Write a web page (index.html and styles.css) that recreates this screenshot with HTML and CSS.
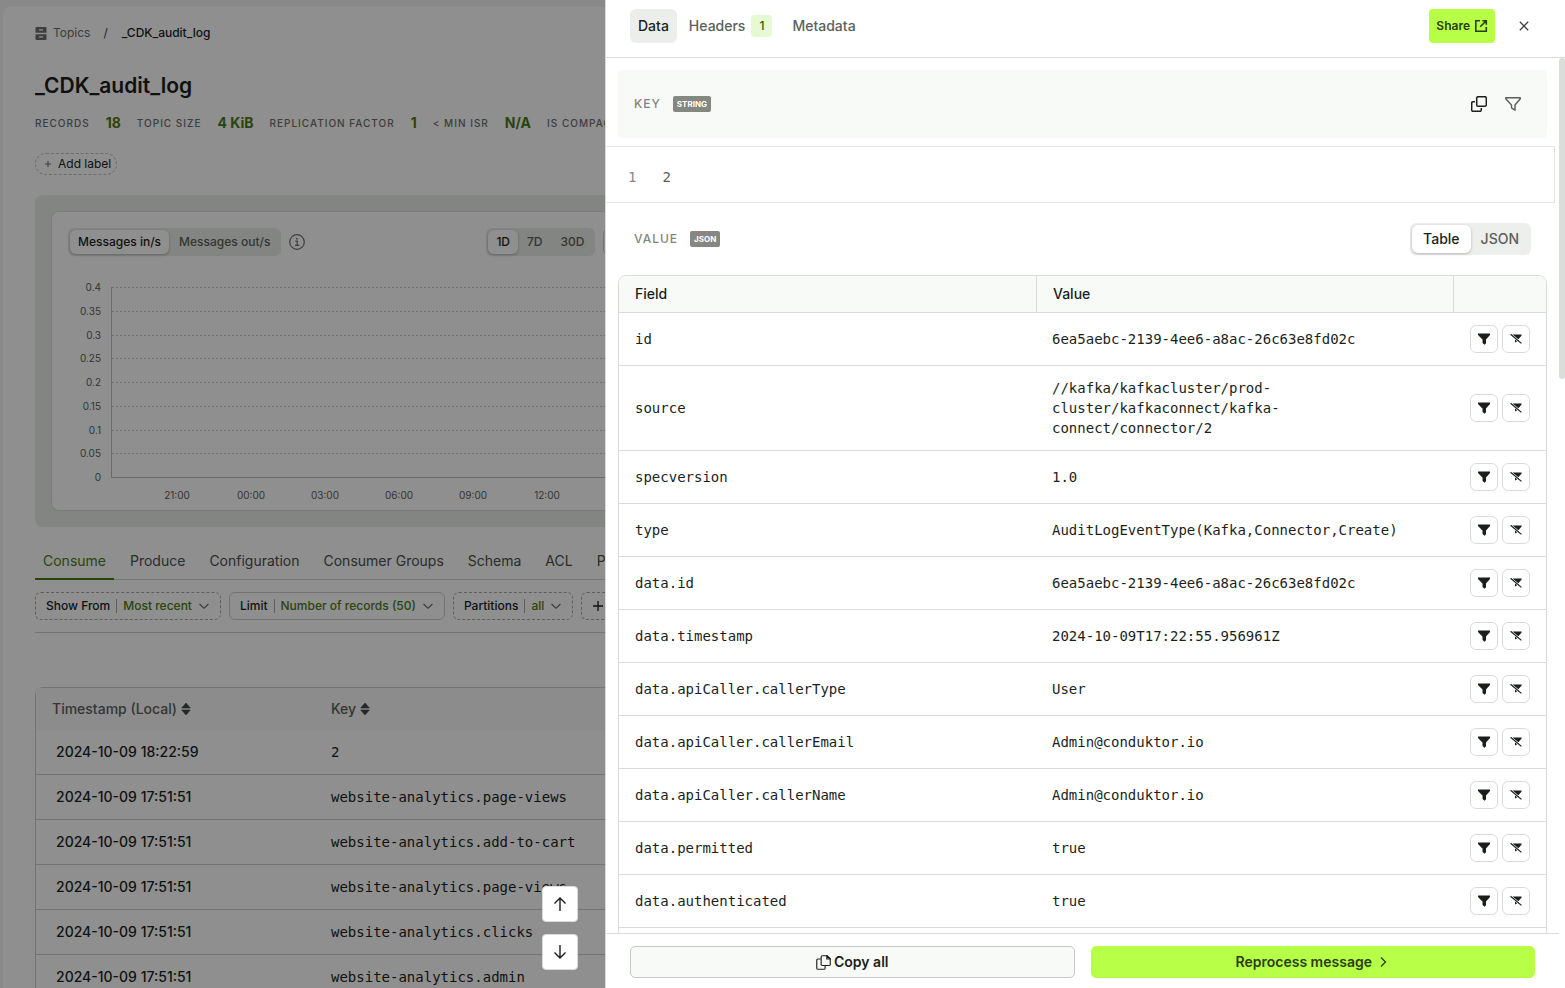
FILE: index.html
```html
<!DOCTYPE html>
<html lang="en">
<head>
<meta charset="utf-8">
<title>_CDK_audit_log</title>
<link rel="stylesheet" href="styles.css">
</head>
<body>
<svg class="sprite" aria-hidden="true">
  <symbol id="i-funnel" viewBox="0 0 14 14"><path d="M1 1.600h12v1.400L9 7.400v3.800L7.500 12.800 5.500 11V7.400L1 3z" fill="currentColor"/></symbol>
  <symbol id="i-funnel-off" viewBox="0 0 14 14"><path d="M3.600 2.600h9v1L9.400 7.200 3.600 2.600zM6 7.400v3l2.300-1.200z" fill="currentColor"/><path d="M1.600 2.200l10.800 9.200" stroke="currentColor" stroke-width="1.200" fill="none"/></symbol>
  <symbol id="i-chevron" viewBox="0 0 12 12"><path d="M1.500 4l4.500 4.300L10.500 4" fill="none" stroke="currentColor" stroke-width="1.100"/></symbol>
  <symbol id="i-sort" viewBox="0 0 10 14"><path d="M5 1l4.300 5H.7zM5 13L.7 8h8.600z" fill="currentColor" stroke="currentColor" stroke-width=".6" stroke-linejoin="round"/></symbol>
</svg>

<main class="page">
  <nav class="crumbs" aria-label="Breadcrumb">
    <svg class="crumb-icon" viewBox="0 0 12 13"><path d="M1.500 0h9a1 1 0 0 1 1 1v4.800H.5V1a1 1 0 0 1 1-1zM.5 7.200h11V12a1 1 0 0 1-1 1h-9a1 1 0 0 1-1-1z" fill="currentColor"/><path d="M4 2.200h4v1.300H4zM4 9.300h4v1.300H4z" fill="#fff"/></svg>
    <a href="#" class="crumb-link">Topics</a><span class="crumb-sep">/</span><span class="crumb-here">_CDK_audit_log</span>
  </nav>
  <h1 class="title">_CDK_audit_log</h1>
  <dl class="stats">
    <div><dt>RECORDS</dt><dd>18</dd></div>
    <div><dt>TOPIC SIZE</dt><dd>4 KiB</dd></div>
    <div><dt>REPLICATION FACTOR</dt><dd>1</dd></div>
    <div><dt>&lt; MIN ISR</dt><dd>N/A</dd></div>
    <div><dt>IS COMPACTED</dt><dd>No</dd></div>
  </dl>
  <button class="add-label"><svg viewBox="0 0 8 8"><path d="M4 1v6M1 4h6" stroke="currentColor"/></svg>Add label</button>

  <section class="panel">
    <div class="card">
      <div class="card-head">
        <div class="seg seg-sm"><button class="on">Messages in/s</button><button>Messages out/s</button></div>
        <svg class="info" viewBox="0 0 16 16"><circle cx="8" cy="8" r="7.300" fill="none" stroke="currentColor" stroke-width="1.200"/><path d="M6.300 7.200h1.900v4M6 11.400h4.300" fill="none" stroke="currentColor" stroke-width="1.200"/><circle cx="7.900" cy="4.800" r=".9" fill="currentColor"/></svg>
        <div class="seg seg-sm range"><button class="on">1D</button><button>7D</button><button>30D</button></div>
        <span class="date-range"></span>
      </div>
      <div class="chart">
        <div class="y-axis"><span>0.4</span><span>0.35</span><span>0.3</span><span>0.25</span><span>0.2</span><span>0.15</span><span>0.1</span><span>0.05</span><span>0</span></div>
        <div class="plot"><i></i><i></i><i></i><i></i><i></i><i></i><i></i><i></i></div>
      </div>
      <div class="x-axis"><span>21:00</span><span>00:00</span><span>03:00</span><span>06:00</span><span>09:00</span><span>12:00</span></div>
    </div>
  </section>

  <nav class="tabs">
    <a href="#" class="on">Consume</a><a href="#">Produce</a><a href="#">Configuration</a><a href="#">Consumer Groups</a><a href="#">Schema</a><a href="#">ACL</a><a href="#">Partitions</a>
  </nav>
  <div class="filters">
    <button class="filter">Show From<span>Most recent</span><svg><use href="#i-chevron"/></svg></button>
    <button class="filter solid">Limit<span>Number of records (50)</span><svg><use href="#i-chevron"/></svg></button>
    <button class="filter">Partitions<span>all</span><svg><use href="#i-chevron"/></svg></button>
    <button class="filter" aria-label="Add filter"><svg viewBox="0 0 12 12"><path d="M6 1v10M1 6h10" stroke="#1b1f1c" stroke-width="1.300"/></svg></button>
  </div>
  <table class="records">
    <thead><tr><th class="c-time">Timestamp (Local) <svg><use href="#i-sort"/></svg></th><th>Key <svg><use href="#i-sort"/></svg></th></tr></thead>
    <tbody>
      <tr><td>2024-10-09 18:22:59</td><td>2</td></tr>
      <tr><td>2024-10-09 17:51:51</td><td>website-analytics.page-views</td></tr>
      <tr><td>2024-10-09 17:51:51</td><td>website-analytics.add-to-cart</td></tr>
      <tr><td>2024-10-09 17:51:51</td><td>website-analytics.page-views</td></tr>
      <tr><td>2024-10-09 17:51:51</td><td>website-analytics.clicks</td></tr>
      <tr><td>2024-10-09 17:51:51</td><td>website-analytics.admin</td></tr>
    </tbody>
  </table>
</main>

<div class="overlay">
  <div class="stepper">
    <button aria-label="Previous message"><svg viewBox="0 0 16 16"><path d="M8 15V2M2.500 7.500L8 2l5.500 5.500" fill="none" stroke="currentColor" stroke-width="1.400"/></svg></button>
    <button aria-label="Next message"><svg viewBox="0 0 16 16"><path d="M8 1v13M2.500 8.500L8 14l5.500-5.500" fill="none" stroke="currentColor" stroke-width="1.400"/></svg></button>
  </div>
  <aside class="drawer">
    <header class="drawer-head">
      <button class="dtab on">Data</button>
      <button class="dtab">Headers<span class="count">1</span></button>
      <button class="dtab">Metadata</button>
      <button class="share">Share<svg viewBox="0 0 14 14"><path d="M6 1.700H1.800v10.500h10.500V8M8.300 1.700h4v4M12.300 1.700L6.200 7.800" fill="none" stroke="currentColor" stroke-width="1.600"/></svg></button>
      <button class="close" aria-label="Close"><svg viewBox="0 0 10 10"><path d="M.8.8l8.400 8.400M9.200.8L.8 9.200" stroke="currentColor" stroke-width="1.300"/></svg></button>
    </header>
    <div class="drawer-main">
      <div class="drawer-col">
        <div class="scroll">
          <div class="key-bar">
            <h2>KEY</h2><span class="tag">STRING</span>
            <div class="key-actions">
              <button aria-label="Copy key"><svg viewBox="0 0 16 16" fill="none" stroke="currentColor" stroke-width="1.500"><rect x="5.700" y=".7" width="9.600" height="9.600" rx="1.300"/><path d="M4 5.700H2A1.300 1.300 0 0 0 .7 7v7A1.300 1.300 0 0 0 2 15.300h7a1.300 1.300 0 0 0 1.300-1.300v-2"/></svg></button>
              <button class="muted" aria-label="Filter by key"><svg viewBox="0 0 16 16" fill="none" stroke="currentColor" stroke-width="1.400" stroke-linejoin="round"><path d="M.7 1.700h14.600v1L10 9v5.200L6.500 11.800V9L.7 2.700z"/></svg></button>
            </div>
          </div>
          <div class="editor"><span class="line-no">1</span><code>2</code></div>
          <div class="value-bar">
            <h2>VALUE</h2><span class="tag">JSON</span>
            <div class="seg view"><button class="on">Table</button><button>JSON</button></div>
          </div>
          <div class="fields-wrap">
          <table class="fields">
            <thead><tr><th>Field</th><th>Value</th><th class="c-act"></th></tr></thead>
            <tbody id="fields"></tbody>
          </table>
          </div>
        </div>
        <footer class="drawer-foot">
          <button class="btn"><svg viewBox="0 0 16 16" fill="none" stroke="currentColor" stroke-width="1.200"><path d="M6.700.8h5.300L15.200 4v6a1.200 1.200 0 0 1-1.200 1.200H6.700A1.200 1.200 0 0 1 5.500 10V2A1.200 1.200 0 0 1 6.700.8z"/><path d="M11.500.8V4.300h3.700zM5 4.200H2A1.200 1.200 0 0 0 .8 5.400V14A1.200 1.200 0 0 0 2 15.200h6.500A1.200 1.200 0 0 0 9.700 14v-2.500"/></svg>Copy all</button>
          <button class="btn primary">Reprocess message<svg class="next" viewBox="0 0 12 12"><path d="M3 1.500L7.500 6 3 10.500" fill="none" stroke="currentColor" stroke-width="1.300"/></svg></button>
        </footer>
      </div>
      <div class="track"><div class="thumb"></div></div>
    </div>
  </aside>
</div>
<script src="app.js"></script>
</body>
</html>
```
FILE: styles.css
```css
* { box-sizing: border-box; }
body {
  margin: 0;
  height: 100vh;
  overflow: hidden;
  background: #f4f4f4;
  color: #1b1f1c;
  font: 500 14px/20px Inter, "Liberation Sans", sans-serif;
}
button { font: inherit; color: inherit; border: 0; background: none; padding: 0; margin: 0; white-space: nowrap; }
a { color: inherit; text-decoration: none; }
svg { display: block; flex: none; }
table { border-collapse: separate; border-spacing: 0; }
h1, h2, dl, dd { margin: 0; }
.sprite { position: absolute; width: 0; height: 0; }

.page {
  height: calc(100vh - 7px);
  margin: 7px 0 0 3px;
  padding: 16px 32px 0;
  overflow: hidden;
  background: #fff;
  border-radius: 8px 0 0 0;
}
.crumbs { display: flex; align-items: center; font-size: 12px; font-weight: 400; }
.crumb-icon { width: 12px; height: 13px; margin-right: 6px; color: #6c706d; }
.crumb-link { color: #6c706d; }
.crumb-sep { margin: 0 14px 0 13px; color: #444; }
.crumb-here { font-weight: 500; }
.title { margin-top: 29px; font-size: 21px; line-height: 28px; font-weight: 600; }
.stats { display: flex; gap: 16px; margin-top: 13px; white-space: nowrap; }
.stats div { display: flex; gap: 16px; align-items: center; }
.stats dt { color: #6c706d; font-size: 10px; letter-spacing: 1px; }
.stats dd { color: #4c7c12; font-weight: 700; }
.add-label {
  display: flex; align-items: center; gap: 6px;
  margin-top: 20px; padding: 0 5px 0 8px; height: 22px;
  border: 1px dashed #bfc3c0; border-radius: 11px;
  font-size: 12px; font-weight: 400;
}
.add-label svg { width: 8px; height: 8px; color: #6c706d; }

.panel { margin-top: 20px; padding: 16px; background: #e9ede9; border-radius: 8px; }
.card { padding: 16px 16px 5px; background: #fff; border: 1px solid #d9dcd9; border-radius: 8px; }
.card-head { display: flex; align-items: center; }
.seg { display: flex; padding: 2px; background: #ecefec; border-radius: 6px; color: #5c605d; }
.seg button { padding: 0 10px; height: 28px; border-radius: 6px; }
.seg .on { background: #fff; color: #1b1f1c; box-shadow: 0 1px 3px rgba(0, 0, 0, .25); }
.seg-sm { font-size: 12px; background: #e9ede9; }
.seg-sm button { padding: 0 8px; height: 24px; }
.seg-sm button + button { padding: 0 9px 0 10px; }
.info { width: 16px; height: 16px; margin-left: 8px; color: #6c706d; }
.range { margin-left: 181px; }
.range button + button { padding: 0 9px; }
.date-range { flex: 1; margin-left: 8px; height: 24px; border: 1px solid #c9ccc9; border-radius: 4px; }
.chart { display: flex; margin-top: 31px; height: 191px; }
.y-axis {
  display: flex; flex-direction: column; justify-content: space-between;
  width: 33px; margin: -10px 10px -9px 0;
  text-align: right; font-size: 10px; font-weight: 400; color: #5c605d;
}
.plot { flex: 1; display: flex; flex-direction: column; border: solid #bcbfbc; border-width: 0 0 1px 1px; }
.plot i { flex: 1; background: repeating-linear-gradient(90deg, #c6c9c6 0 2px, transparent 2px 4px) top / 100% 1px no-repeat; }
.x-axis { display: flex; margin: 7px 0 0 72px; font-size: 10px; font-weight: 400; color: #5c605d; }
.x-axis span { width: 74px; text-align: center; }

.tabs { display: flex; gap: 8px; margin-top: 16px; height: 37px; border-bottom: 1px solid #d0d3d0; color: #4c504d; font-weight: 400; white-space: nowrap; }
.tabs a { height: 37px; padding: 8px 8px 0; }
.tabs .on { color: #4c7c12; border-bottom: 2px solid #4c7c12; }
.filters { display: flex; gap: 8px; padding: 12px 0; border-bottom: 1px solid #cccfcc; }
.filter { display: flex; align-items: center; height: 28px; padding: 0 10px; border: 1px dashed #a5a9a6; border-radius: 6px; font-size: 12px; }
.filter.solid { border: 1px solid #cccfcc; }
.filter span { margin: 0 6px; padding-left: 6px; line-height: 14px; border-left: 1px solid #a5a9a6; color: #4c7c12; }
.filter svg { width: 12px; height: 12px; color: #5c605d; }

.records { width: 100%; margin-top: 54px; table-layout: fixed; border: 1px solid #cccfcc; border-radius: 8px 8px 0 0; }
.records th { height: 42px; padding: 0 16px; text-align: left; font-weight: 500; color: #5c605d; background: #f9faf9; }
.records th svg { display: inline-block; width: 10px; height: 14px; vertical-align: -2px; color: #434744; }
.c-time { width: 279px; }
.records td { height: 45px; padding: 0 16px; border-bottom: 1px solid #cccfcc; }
.records td:first-child { padding-left: 20px; }
.records td + td, .fields td, .editor { font-family: "DejaVu Sans Mono", "Liberation Mono", monospace; font-weight: 400; }

.overlay { position: fixed; inset: 0; display: flex; justify-content: flex-end; background: rgba(0, 0, 0, .44); }
.stepper { align-self: flex-end; display: flex; flex-direction: column; gap: 12px; margin: 0 27px 18px 0; }
.stepper button { display: grid; place-items: center; width: 36px; height: 36px; background: #fff; border: 1px solid #d9dcd9; border-radius: 4px; }
.stepper svg { width: 16px; height: 16px; }
.drawer { display: flex; flex-direction: column; width: 960px; background: #fff; border-left: 1px solid #d9dcd9; }
.drawer-head { display: flex; gap: 4px; padding: 9px 24px 14px; border-bottom: 1px solid #d9dcd9; }
.dtab { display: flex; align-items: center; height: 34px; padding: 0 8px; border-radius: 6px; color: #5c605d; }
.dtab.on { background: #eceeec; color: #1b1f1c; }
.count { margin-left: 6px; padding: 1px 8px; background: #e5f9d3; border-radius: 4px; color: #35570c; font-size: 12px; }
.share { display: flex; align-items: center; gap: 4px; height: 34px; margin-left: auto; padding: 0 7px; background: #b8ff48; border-radius: 4px; font-size: 12px; font-weight: 600; color: #2b3d12; }
.share svg { width: 14px; height: 14px; }
.close { display: grid; place-items: center; width: 34px; height: 34px; margin-left: 8px; }
.close svg { width: 10px; height: 10px; color: #444; }

.drawer-main { flex: 1; min-height: 0; display: flex; }
.drawer-col { flex: 1; min-width: 0; display: flex; flex-direction: column; }
.track { width: 6px; }
.thumb { height: 321px; background: #dadedb; border-radius: 3px; }
.scroll { flex: 1; min-height: 0; overflow: hidden; padding-top: 12px; }
.key-bar { display: flex; align-items: center; height: 68px; margin: 0 12px; padding: 0 17px 0 16px; background: #f8faf8; border-radius: 4px; }
h2 { font-size: 12px; line-height: 16px; font-weight: 500; letter-spacing: 1px; color: #80857f; }
.tag { margin-left: 12px; padding: 0 4px; border-radius: 2px; background: #858781; color: #fff; font-size: 8px; line-height: 16px; font-weight: 700; }
.key-actions { display: flex; margin-left: auto; }
.key-actions button { display: grid; place-items: center; width: 34px; height: 34px; }
.key-actions svg { width: 16px; height: 16px; }
.key-actions .muted { color: #5c605d; }
.editor { display: flex; gap: 26px; margin: 8px 4px 0 0; padding: 20px 22px 15px; border: 1px solid #e3e5e3; border-left: 0; color: #5c605d; }
.editor code { font: inherit; }
.line-no { color: #858a86; }
.value-bar { display: flex; align-items: center; padding: 20px 28px; }
.view { margin-left: auto; }
.view .on { padding: 0 11px; }

.fields-wrap { margin: 0 12px; }
.fields { width: 100%; table-layout: fixed; border: 1px solid #d9dcd9; border-radius: 8px; overflow: hidden; }
.fields th { height: 37px; padding: 0 16px; text-align: left; font-weight: 500; background: #f8faf8; border-bottom: 1px solid #d9dcd9; }
.fields th + th { border-left: 1px solid #d9dcd9; }
.fields .c-act { width: 93px; }
.fields td { height: 53px; padding: 12px 16px; border-bottom: 1px solid #d9dcd9; }
.fields td:last-child { padding: 0 16px 0 17px; }
.acts { display: flex; gap: 4px; }
.acts button { display: grid; place-items: center; width: 28px; height: 28px; border: 1px solid #d9dcd9; border-radius: 6px; }
.acts svg { width: 14px; height: 14px; }

.drawer-foot { display: flex; gap: 16px; padding: 12px 24px 10px; border-top: 1px solid #d9dcd9; }
.btn { flex: 1; display: flex; align-items: center; justify-content: center; gap: 3px; height: 32px; background: #f8faf8; border: 1px solid #c6c9c6; border-radius: 5px; font-weight: 600; }
.btn svg { width: 15px; height: 15px; }
.btn.primary { gap: 6px; background: #b8ff48; border-color: #b8ff48; color: #2b3d12; }
.btn .next { width: 12px; height: 12px; }
```
FILE: app.js
```js
const rows = [
  ["id", "6ea5aebc-2139-4ee6-a8ac-26c63e8fd02c"],
  ["source", "//kafka/kafkacluster/prod-cluster/kafkaconnect/kafka-connect/connector/2"],
  ["specversion", "1.0"],
  ["type", "AuditLogEventType(Kafka,Connector,Create)"],
  ["data.id", "6ea5aebc-2139-4ee6-a8ac-26c63e8fd02c"],
  ["data.timestamp", "2024-10-09T17:22:55.956961Z"],
  ["data.apiCaller.callerType", "User"],
  ["data.apiCaller.callerEmail", "Admin@conduktor.io"],
  ["data.apiCaller.callerName", "Admin@conduktor.io"],
  ["data.permitted", "true"],
  ["data.authenticated", "true"],
  ["", ""]
];
const actions = '<div class="acts"><button aria-label="Include"><svg><use href="#i-funnel"/></svg></button>' +
  '<button aria-label="Exclude"><svg><use href="#i-funnel-off"/></svg></button></div>';
document.getElementById("fields").innerHTML = rows
  .map(([field, value]) => `<tr><td>${field}</td><td>${value}</td><td>${actions}</td></tr>`)
  .join("");
```
